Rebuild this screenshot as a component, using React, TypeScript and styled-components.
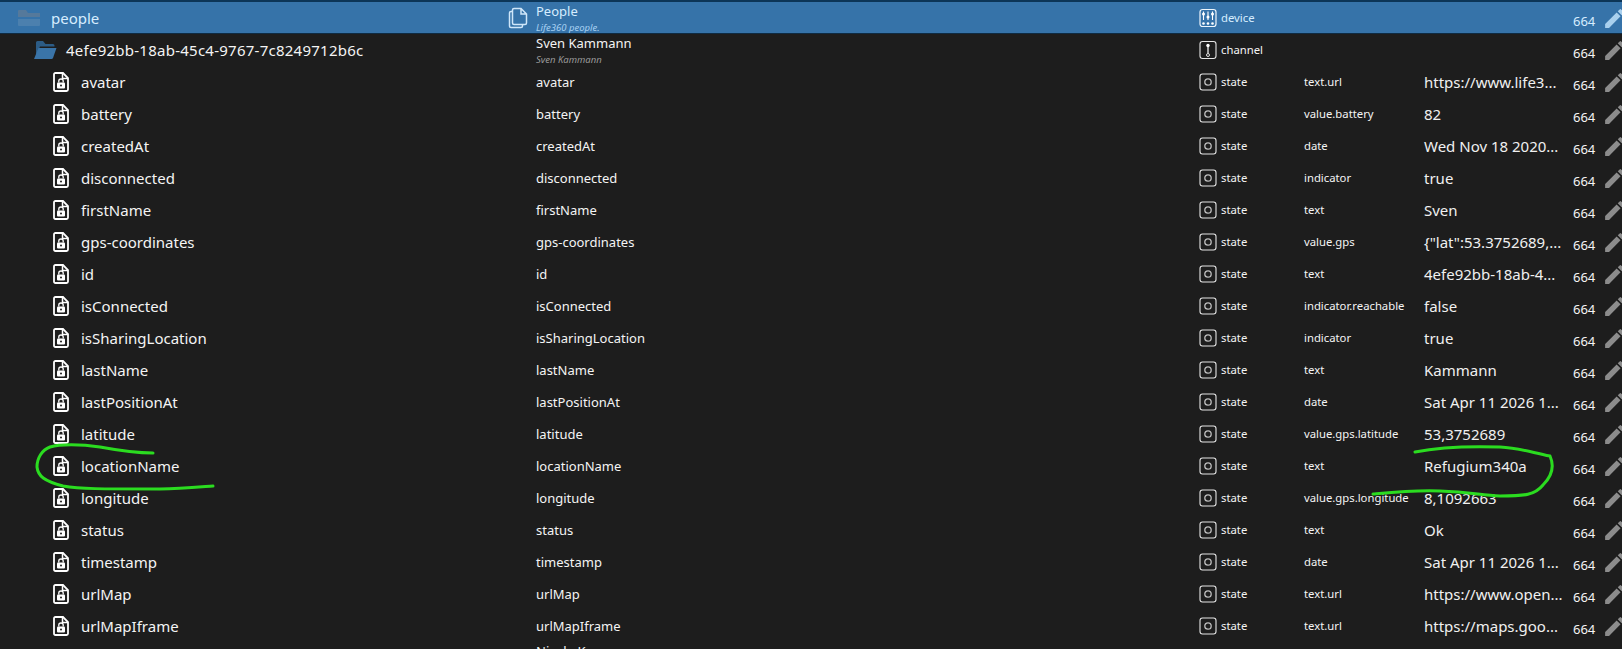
import React from 'react'
import styled, { createGlobalStyle } from 'styled-components'

const GlobalStyle = createGlobalStyle`
  html, body {
    margin: 0;
    background: #1d1d1d;
  }
`

const states = [
  ['avatar', 'text.url', 'https://www.life3...'],
  ['battery', 'value.battery', '82'],
  ['createdAt', 'date', 'Wed Nov 18 2020...'],
  ['disconnected', 'indicator', 'true'],
  ['firstName', 'text', 'Sven'],
  ['gps-coordinates', 'value.gps', '{"lat":53.3752689,...'],
  ['id', 'text', '4efe92bb-18ab-4...'],
  ['isConnected', 'indicator.reachable', 'false'],
  ['isSharingLocation', 'indicator', 'true'],
  ['lastName', 'text', 'Kammann'],
  ['lastPositionAt', 'date', 'Sat Apr 11 2026 1...'],
  ['latitude', 'value.gps.latitude', '53,3752689'],
  ['locationName', 'text', 'Refugium340a'],
  ['longitude', 'value.gps.longitude', '8,1092663'],
  ['status', 'text', 'Ok'],
  ['timestamp', 'date', 'Sat Apr 11 2026 1...'],
  ['urlMap', 'text.url', 'https://www.open...'],
  ['urlMapIframe', 'text.url', 'https://maps.goo...'],
]

const FolderIcon = () => (
  <svg width="24" height="20" viewBox="0 0 24 20">
    <path d="M3 16 L3 2.500 Q3 1 4.500 1 L10 1 L12.500 4 L20 4 Q21.500 4 21.500 5.500 L21.500 6.500 L7 6.500 Z" fill="#2c5c86" />
    <path d="M5.500 8 L23.500 8 L20 18 Q19.600 19 18.500 19 L1 19 Z" fill="#3a74a8" />
  </svg>
)

const ClosedFolder = () => (
  <svg width="24" height="20" viewBox="0 0 24 20">
    <path d="M1 3 Q1 2 2 2 L9 2 L11 5 L23 5 L23 9 L1 9 Z" fill="#55799b" />
    <path d="M1 11 L23 11 L23 17 Q23 18 22 18 L2 18 Q1 18 1 17 Z" fill="#4c80ae" />
  </svg>
)

const FileLockIcon = () => (
  <svg width="16" height="20" viewBox="0 0 16 20">
    <path d="M2.500 1 L10 1 L15 6 L15 17.500 Q15 19 13.500 19 L2.500 19 Q1 19 1 17.500 L1 2.500 Q1 1 2.500 1 Z" fill="none" stroke="#fff" strokeWidth="1.800" />
    <path d="M9.500 1 L9.500 6.500 L15 6.500" fill="none" stroke="#fff" strokeWidth="1.500" />
    <rect x="4" y="10.500" width="8" height="6" rx="1" fill="#fff" />
    <path d="M5.800 10.500 L5.800 9 Q5.800 7 8 7 Q10.200 7 10.200 9 L10.200 10.500" fill="none" stroke="#fff" strokeWidth="1.300" />
    <circle cx="8" cy="13.500" r="1" fill="#1d1d1d" />
  </svg>
)

const CopyIcon = () => (
  <svg width="20" height="22" viewBox="0 0 20 22">
    <path d="M6 1.500 L13 1.500 L18.500 7 L18.500 16 Q18.500 17.500 17 17.500 L6 17.500 Q4.500 17.500 4.500 16 L4.500 3 Q4.500 1.500 6 1.500 Z M13 1.500 L13 7 L18.500 7" fill="none" stroke="#cfe6f9" strokeWidth="1.500" />
    <path d="M4.500 4.500 L3 4.500 Q1.500 4.500 1.500 6 L1.500 19 Q1.500 20.500 3 20.500 L13 20.500 Q14.500 20.500 14.500 19 L14.500 17.500" fill="none" stroke="#cfe6f9" strokeWidth="1.500" />
  </svg>
)

const DeviceIcon = () => (
  <svg width="18" height="20" viewBox="0 0 18 20">
    <rect x="1" y="1.500" width="16" height="17" rx="2.500" fill="none" stroke="#eef6fc" strokeWidth="1.200" />
    <path d="M4.500 3.500 V12 M9 3.500 V12 M13.500 3.500 V12" stroke="#fff" strokeWidth="1.100" />
    <circle cx="4.500" cy="6" r="1.500" fill="#fff" />
    <circle cx="9" cy="9" r="1.500" fill="#fff" />
    <circle cx="13.500" cy="6" r="1.500" fill="#fff" />
    <circle cx="4.500" cy="15.500" r="1.300" fill="#fff" />
    <circle cx="9" cy="15.500" r="1.300" fill="#fff" />
    <circle cx="13.500" cy="15.500" r="1.300" fill="#fff" />
  </svg>
)

const ChannelIcon = () => (
  <svg width="18" height="20" viewBox="0 0 18 20">
    <rect x="1" y="1.500" width="16" height="17" rx="2.500" fill="none" stroke="#e6e6e6" strokeWidth="1.100" />
    <circle cx="9" cy="5.500" r="1.700" fill="#fff" />
    <path d="M9 6 V13.500" stroke="#fff" strokeWidth="1.200" />
    <circle cx="9" cy="15" r="1.500" fill="none" stroke="#ddd" strokeWidth="1" />
  </svg>
)

const StateIcon = () => (
  <svg width="18" height="20" viewBox="0 0 18 20">
    <rect x="1" y="2" width="16" height="16" rx="2.500" fill="none" stroke="#e6e6e6" strokeWidth="1.100" />
    <circle cx="9" cy="10" r="3.200" fill="none" stroke="#bdbdbd" strokeWidth="1.300" />
  </svg>
)

const PencilIcon = ({ $fill }: { $fill: string }) => (
  <svg width="25" height="25" viewBox="0 0 24 24">
    <path
      fill={$fill}
      d="M3 17.250V21h3.750L17.810 9.940l-3.750-3.750L3 17.250zM20.710 7.040c.39-.39.39-1.020 0-1.410l-2.340-2.340a.9959.9959 0 0 0-1.410 0l-1.830 1.830 3.750 3.750 1.830-1.830z"
    />
  </svg>
)

const Row = ({ selected, depth, icon, name, nameIcon, title, sub, typeIcon, type, role, value }: any) => (
  <RowBox $selected={selected}>
    <TreeCell $depth={depth}>
      <TreeIcon $depth={depth}>{icon}</TreeIcon>
      <TreeName $depth={depth}>{name}</TreeName>
    </TreeCell>
    <NameIconCell>{nameIcon}</NameIconCell>
    <TitleCell $stacked={!!sub}>
      <Title>{title}</Title>
      {sub && <Sub $selected={selected}>{sub}</Sub>}
    </TitleCell>
    <TypeCell>
      {typeIcon}
      <span>{type}</span>
    </TypeCell>
    <RoleCell>{role}</RoleCell>
    <ValueCell>{value}</ValueCell>
    <AclCell>664</AclCell>
    <EditCell>
      <PencilIcon $fill={selected ? '#a9d0ee' : '#8c8c8c'} />
    </EditCell>
  </RowBox>
)

export default function App() {
  return (
    <Page>
      <GlobalStyle />
      <Row
        selected
        depth={0}
        icon={<ClosedFolder />}
        name="people"
        nameIcon={<CopyIcon />}
        title="People"
        sub="Life360 people."
        typeIcon={<DeviceIcon />}
        type="device"
      />
      <Row
        depth={1}
        icon={<FolderIcon />}
        name="4efe92bb-18ab-45c4-9767-7c8249712b6c"
        title="Sven Kammann"
        sub="Sven Kammann"
        typeIcon={<ChannelIcon />}
        type="channel"
      />
      {states.map(([name, role, value]) => (
        <Row
          key={name}
          depth={2}
          icon={<FileLockIcon />}
          name={name}
          title={name}
          typeIcon={<StateIcon />}
          type="state"
          role={role}
          value={value}
        />
      ))}
      <Row depth={1} icon={<FolderIcon />} title="Nicole K" sub="Nicole K" typeIcon={<ChannelIcon />} type="channel" />
      <Marker viewBox="0 0 1622 649" fill="none">
        <path d="M153 453 C140 453 127 452 100 447 C80 444 60 444 50 447 C42 450 37 458 37 467 C38 476 44 481 63 486 C80 489 100 489 160 489 C180 489 200 487 213 486" />
        <path d="M1415 452 C1440 447 1470 446 1500 447 C1520 448 1530 452 1550 456 C1554 465 1553 475 1543 485 C1535 495 1525 496 1500 496 C1480 495 1470 492 1440 491 C1415 490 1395 492 1373 494" />
      </Marker>
    </Page>
  )
}

const Page = styled.div`
  position: relative;
  width: 1622px;
  height: 649px;
  overflow: hidden;
  box-sizing: border-box;
  border-top: 2px solid #0c3557;
  background: #1d1d1d;
  color: #fff;
  font-family: "Noto Sans", "Open Sans", sans-serif;
`

const RowBox = styled.div<{ $selected?: boolean }>`
  display: grid;
  grid-template-columns: 508px 28px 659px 109px 120px 149px 29px 20px;
  height: 32px;
  box-sizing: border-box;
  align-items: center;
  overflow: hidden;
  background: ${p => (p.$selected ? '#3673a9' : 'transparent')};
  border-bottom: ${p => (p.$selected ? '1px solid #0f2b42' : 'none')};
  color: ${p => (p.$selected ? '#d6edff' : '#f4f4f4')};
`

const TreeCell = styled.div<{ $depth: number }>`
  display: flex;
  align-items: center;
  padding-left: ${p => [17, 33, 53][p.$depth]}px;
`

const TreeIcon = styled.span<{ $depth: number }>`
  display: flex;
  width: ${p => [34, 33, 28][p.$depth]}px;
  flex: none;
`

const TreeName = styled.span<{ $depth: number }>`
  font-size: 15px;
  letter-spacing: ${p => (p.$depth === 1 ? 0.25 : 0)}px;
  white-space: nowrap;
`

const NameIconCell = styled.div`
  display: flex;
  align-items: center;
`

const TitleCell = styled.div<{ $stacked: boolean }>`
  display: flex;
  flex-direction: column;
  height: 32px;
  box-sizing: border-box;
  padding-top: ${p => (p.$stacked ? 3 : 0)}px;
  justify-content: center;
  white-space: nowrap;
`

const Title = styled.div`
  font-size: 13px;
  line-height: 16px;
`

const Sub = styled.div<{ $selected?: boolean }>`
  margin-top: 1px;
  font-size: 9.500px;
  font-style: italic;
  line-height: 16px;
  color: ${p => (p.$selected ? '#a6d0f2' : '#9a9a9a')};
`

const TypeCell = styled.div`
  display: flex;
  align-items: center;
  gap: 4px;
  padding-left: 4px;
  font-size: 11.300px;

  span {
    position: relative;
    top: -1px;
  }
`

const RoleCell = styled.div`
  padding-bottom: 2px;
  font-size: 11.300px;
  white-space: nowrap;
`

const ValueCell = styled.div`
  font-size: 15px;
  color: #f0f0f0;
  white-space: nowrap;
`

const AclCell = styled.div`
  padding-top: 6px;
  font-size: 13px;
`

const EditCell = styled.div`
  display: flex;
  width: 25px;
  margin-left: 0;
`

const Marker = styled.svg`
  position: absolute;
  top: -2px;
  left: 0;
  width: 1622px;
  height: 649px;
  pointer-events: none;

  path {
    stroke: #2bdc20;
    stroke-width: 3;
    stroke-linecap: round;
  }
`
